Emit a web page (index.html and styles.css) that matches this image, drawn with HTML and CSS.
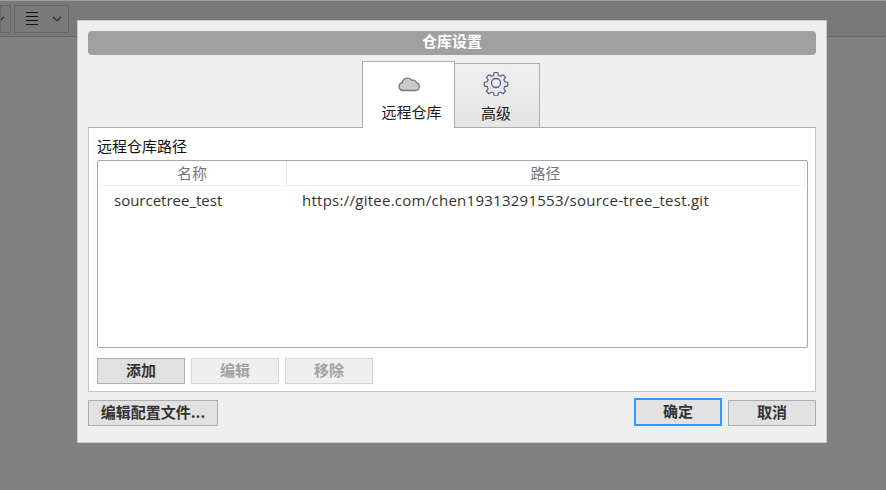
FILE: index.html
```html
<!DOCTYPE html>
<html lang="zh-CN">
<head>
<meta charset="utf-8">
<title>仓库设置</title>
<link rel="stylesheet" href="styles.css">
</head>
<body>
<div class="toolbar">
  <div class="tool tool-cut"><svg class="chev" width="10" height="6" viewBox="0 0 10 6"><path d="M1 1l4 3.600L9 1" fill="none" stroke="#2b2b2b" stroke-width="1.200"/></svg></div>
  <div class="tool tool-menu">
    <svg width="12" height="14" viewBox="0 0 12 14"><path d="M0 .5h12M0 4.500h12M0 8.500h12M0 12.500h12" stroke="#111" stroke-width="1"/></svg>
    <svg class="chev" width="10" height="6" viewBox="0 0 10 6"><path d="M1 1l4 3.600L9 1" fill="none" stroke="#2b2b2b" stroke-width="1.200"/></svg>
  </div>
</div>
<div class="dialog">
  <div class="title">仓库设置</div>
  <div class="tabs">
    <div class="tab active">
      <svg width="24" height="18" viewBox="0 0 24 18"><path d="M5.500 16.500h13a4 4 0 0 0 1-7.800 3.500 3.500 0 0 0-4.500-2.400A5.500 5.500 0 0 0 5.200 8.500a4.100 4.100 0 0 0 .3 8z" fill="#c9c9c9" stroke="#777" stroke-width="1.300"/></svg>
      <span>远程仓库</span>
    </div>
    <div class="tab">
      <svg width="26" height="26" viewBox="0 0 26 26"><path d="M11 1.500h4l.6 3.200 2.300 1 2.700-1.800 2.800 2.800-1.800 2.700 1 2.300 3.200.6v4l-3.200.6-1 2.300 1.800 2.700-2.800 2.800-2.700-1.800-2.300 1-.6 3.200h-4l-.6-3.200-2.300-1-2.700 1.800-2.800-2.800 1.800-2.700-1-2.300-3.200-.6v-4l3.200-.6 1-2.300-1.800-2.700 2.800-2.800 2.700 1.800 2.300-1z" transform="translate(1.100 1.100) scale(.915)" fill="#e6e8ee" stroke="#59607a" stroke-width="1.300"/><circle cx="13" cy="13" r="4.500" fill="#eee" stroke="#59607a" stroke-width="1.300"/></svg>
      <span>高级</span>
    </div>
  </div>
  <div class="panel">
    <div class="panel-label">远程仓库路径</div>
    <div class="list">
      <div class="list-head">
        <div class="col-name">名称</div>
        <div class="col-path">路径</div>
      </div>
      <div class="list-row">
        <div class="cell-name">sourcetree_test</div>
        <div class="cell-path">https://gitee.com/chen19313291553/source-tree_test.git</div>
      </div>
    </div>
    <div class="panel-actions">
      <button class="btn">添加</button>
      <button class="btn disabled">编辑</button>
      <button class="btn disabled">移除</button>
    </div>
  </div>
  <div class="footer">
    <button class="btn wide">编辑配置文件...</button>
    <div class="footer-right">
      <button class="btn primary">确定</button>
      <button class="btn">取消</button>
    </div>
  </div>
</div>
</body>
</html>
```
FILE: styles.css
```css
* { box-sizing: border-box; }
html, body { margin: 0; height: 100%; }
body {
  position: relative;
  width: 886px;
  height: 490px;
  overflow: hidden;
  background: #808080;
  font-family: "Noto Sans CJK SC", "Open Sans", sans-serif;
  font-size: 15px;
  color: #1a1a1a;
}
.toolbar {
  height: 37px;
  padding-top: 5px;
  display: flex;
  gap: 3px;
  background: #797979;
  border-top: 1px solid #a0a0a0;
  border-bottom: 1px solid #686868;
}
.tool {
  height: 28px;
  margin-top: -1px;
  border: 1px solid #666;
  display: flex;
  align-items: center;
}
.tool-cut { width: 11px; overflow: hidden; }
.tool-cut .chev { margin-left: -6px; flex: none; }
.tool-menu { width: 55px; padding-left: 11px; gap: 14px; }
.dialog {
  position: absolute;
  left: 77px;
  top: 20px;
  width: 750px;
  height: 423px;
  background: #efefef;
  border: 1px solid #c9c9c9;
  padding: 10px 10px 0;
  display: flex;
  flex-direction: column;
}
.title {
  height: 24px;
  border-radius: 4px;
  background: #a0a0a0;
  color: #fff;
  font-weight: 700;
  font-size: 15px;
  line-height: 20px;
  text-align: center;
}
.tabs {
  display: flex;
  align-items: flex-end;
  height: 73px;
  padding-left: 274px;
  margin-bottom: -1px;
  position: relative;
  z-index: 1;
}
.tab {
  width: 86px;
  height: 65px;
  margin-left: -1px;
  border: 1px solid #adadad;
  background: linear-gradient(#f0f0f0, #e5e5e5);
  display: flex;
  flex-direction: column;
  align-items: center;
  line-height: 20px;
  padding-top: 6px;
}
.tab svg { flex: none; margin-left: -2px; }
.tab span { margin-top: 7px; margin-left: -2px; }
.tab.active {
  width: 93px;
  height: 67px;
  margin-left: 0;
  background: #fff;
  border-bottom: 0;
  position: relative;
  z-index: 1;
  padding-top: 12px;
}
.tab.active svg { margin-left: 0; }
.tab.active span { margin-top: 10px; margin-left: 6px; }
.panel {
  height: 265px;
  background: #fff;
  border: 1px solid #c4c4c4;
  border-top-color: #adadad;
  padding: 8px 8px 0;
}
.panel-label {
  height: 24px;
  line-height: 19px;
  color: #111;
}
.list {
  width: 711px;
  height: 188px;
  border: 1px solid #a8a8a8;
  border-radius: 2px;
  background: #fff;
}
.list-head {
  display: flex;
  height: 25px;
  margin-right: 2px;
  border-bottom: 1px solid #efefef;
  color: #777;
  line-height: 24px;
  text-align: center;
}
.col-name { width: 189px; border-right: 1px solid #e6e6e6; }
.col-path { flex: 1; border-right: 1px solid #efefef; }
.list-row {
  display: flex;
  height: 28px;
  font-family: "Open Sans", sans-serif;
  font-size: 15px;
  line-height: 28px;
  color: #333;
}
.cell-name { width: 204px; padding-left: 16px; }
.cell-path { flex: 1; letter-spacing: .26px; }
.panel-actions {
  display: flex;
  gap: 6px;
  margin-top: 10px;
}
.btn {
  width: 88px;
  height: 26px;
  padding: 0 0 2px;
  border: 1px solid #adadad;
  background: #e1e1e1;
  font-family: inherit;
  font-size: 15px;
  font-weight: 700;
  line-height: 22px;
  color: #333;
}
.btn.disabled {
  background: #efefef;
  border-color: #d4d4d4;
  color: #a3a3a3;
}
.footer {
  display: flex;
  justify-content: space-between;
  align-items: flex-end;
  margin-top: 8px;
  height: 26px;
}
.btn.wide { width: 130px; }
.footer-right { display: flex; align-items: flex-end; gap: 6px; }
.btn.primary {
  height: 28px;
  padding-bottom: 3px;
  border: 2px solid #3399ff;
}
```
